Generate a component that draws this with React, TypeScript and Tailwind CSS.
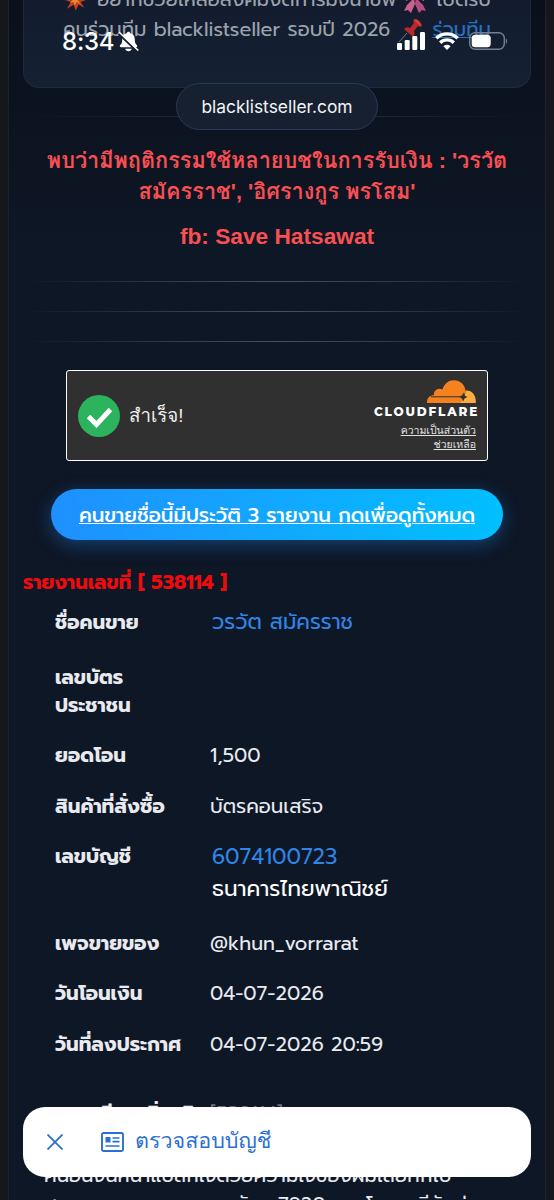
import type { ReactNode } from "react";
import { clsx } from "clsx";

const THAI = "font-['Prompt','Noto_Sans_Thai','Noto_Sans',sans-serif]";
const THAI_LOOPED = "font-['Liberation_Sans','Loma','Waree','Noto_Sans_Thai_Looped',sans-serif]";

type Row = {
  label: ReactNode;
  value?: ReactNode;
  height: string;
};

const rows: Row[] = [
  {
    label: <span>ชื่อคนขาย</span>,
    value: <span className="pl-0.5 text-[21.3px] text-[#2f86e6]">วรวัต สมัครราช</span>,
    height: "h-[54.5px]",
  },
  {
    label: (
      <span>
        เลขบัตร
        <br />
        ประชาชน
      </span>
    ),
    height: "h-[78.5px]",
  },
  { label: <span>ยอดโอน</span>, value: <span>1,500</span>, height: "h-[50.5px]" },
  { label: <span>สินค้าที่สั่งซื้อ</span>, value: <span>บัตรคอนเสริจ</span>, height: "h-[50.5px]" },
  {
    label: <span>เลขบัญชี</span>,
    value: (
      <div className="mt-px flex flex-col pl-0.5 text-[21.5px]">
        <span className="h-8 text-[#2f86e6]">6074100723</span>
        <span className="text-white">ธนาคารไทยพาณิชย์</span>
      </div>
    ),
    height: "h-[86.5px]",
  },
  { label: <span>เพจขายของ</span>, value: <span>@khun_vorrarat</span>, height: "h-[50.5px]" },
  { label: <span>วันโอนเงิน</span>, value: <span>04-07-2026</span>, height: "h-[50.5px]" },
  { label: <span>วันที่ลงประกาศ</span>, value: <span>04-07-2026 20:59</span>, height: "h-[50.5px]" },
];

function Divider({ className }: { className?: string }) {
  return (
    <div
      className={clsx(
        "h-px w-full bg-linear-to-r from-transparent via-[#485260] to-transparent",
        className
      )}
    />
  );
}

function BurstIcon() {
  return (
    <svg viewBox="0 0 22 22" className="ml-0.5 inline-block h-[22px] w-[22px]">
      <path d="M11 0l2 6 6-4-3 6 6 3-6 2 4 6-6-3-3 6-2-6-7 4 4-7-6-2 6-3-4-6 6 4z" fill="#c2401c" />
      <path d="M11 5l1 4 4-1-3 3 3 4-4-2-2 4-1-4-4 1 3-3-3-3 4 1z" fill="#e8892b" />
    </svg>
  );
}

function RibbonIcon() {
  return (
    <svg viewBox="0 0 24 24" className="inline-block h-6 w-6">
      <path d="M11 9l-7 7-3 6 4-1 3 3 4-9z" fill="#c9608f" />
      <path d="M13 9l7 7 3 6-4-1-3 3-4-9z" fill="#b64f80" />
      <path d="M12 8L3 3v9zM12 8l9-5v9z" fill="#d96c9c" />
    </svg>
  );
}

function PushpinIcon() {
  return (
    <svg viewBox="0 0 26 26" className="inline-block h-[26px] w-[26px]">
      <path d="M9 15l-8 9" stroke="#727b87" strokeWidth="1" />
      <path d="M16 1c3-1 8 4 8 7-1 1-3 1-4 0l-4 5c1 3 0 5-1 6L6 11c2-2 4-2 6-1l4-5c-1-1-1-3 0-4z" fill="#b8282b" />
      <path d="M17 2c2-1 6 4 6 6l-2-1-4-4z" fill="#da4340" />
    </svg>
  );
}

function StatusBar() {
  return (
    <div className="absolute inset-x-0 top-[27px] z-20 flex h-7 items-center pl-[62px] pr-[46px] text-white">
      <span className="mt-0.5 font-['Inter',sans-serif] text-[24px] leading-7 font-medium tracking-[-0.2px]">8:34</span>
      <svg viewBox="0 0 20 20" className="ml-1 h-[21px] w-[21px]">
        <path d="M10 .8c.9 0 1.600.6 1.700 1.400 2.700.7 4.300 2.800 4.300 5.600 0 3.200.7 4.400 1.900 5.600.8.9.4 2-.9 2H3c-1.300 0-1.700-1.100-.9-2C3.300 12.200 4 11 4 7.800c0-2.800 1.600-4.900 4.300-5.600C8.400 1.400 9.100.8 10 .8z" fill="white" />
        <path d="M6.800 16.800h6.400c-.4 1.400-1.700 2.400-3.200 2.400s-2.800-1-3.200-2.400z" fill="white" />
        <path d="M.6 2.600l17.700 16.600" stroke="#16202f" strokeWidth="2.200" />
        <path d="M1.400 1.400l17.600 16.800" stroke="white" strokeWidth="1.400" strokeLinecap="round" />
      </svg>
      <svg viewBox="0 0 28 18" className="ml-auto h-[18px] w-7" fill="white">
        <rect x="0" y="11" width="5" height="7" rx="1.300" />
        <rect x="7.700" y="8" width="5" height="10" rx="1.300" />
        <rect x="15.300" y="4" width="5" height="14" rx="1.300" />
        <rect x="23" y="0" width="5" height="18" rx="1.300" />
      </svg>
      <svg viewBox="0 0 24 18" className="ml-2.5 h-[18px] w-6" fill="none" stroke="white" strokeWidth="3.400">
        <path d="M1.300 6.300a15.200 15.200 0 0 1 21.400 0" />
        <path d="M5.200 10.700a9.700 9.700 0 0 1 13.600 0" />
        <path d="M12 18l-3.600-3.800a5.200 5.200 0 0 1 7.200 0z" fill="white" stroke="none" />
      </svg>
      <svg viewBox="0 0 39 18" className="ml-2.5 h-[18px] w-[39px]">
        <rect x=".7" y=".7" width="34.600" height="16.600" rx="5.500" fill="none" stroke="#777f8b" strokeWidth="1.400" />
        <rect x="2.700" y="2.700" width="19" height="12.600" rx="3.500" fill="white" />
        <path d="M36.800 6.200c1.600.6 1.600 5 0 5.600z" fill="#777f8b" />
      </svg>
    </div>
  );
}

function CloudflareLogo() {
  return (
    <svg viewBox="0 0 49 23" className="h-[23px] w-[49px] shrink-0">
      <path d="M0 23c-.2-4.600 2.600-7.700 7-8-.7-4.500 4.300-8 8.400-5.400C17.500 3.600 21.400.3 27 .3c6.300 0 10.800 4.400 11.500 10.400L34.500 23z" fill="#f6821f" />
      <path d="M38.500 10.600c6.300-.7 10.900 4.500 10.300 12.400H33c3.600-3 5.300-7.200 5.500-12.400z" fill="#fbad41" />
      <path d="M4 16.800h30" stroke="#303030" strokeWidth="1" />
      <path d="M36.300 12.500c.7 2.900 1.500 3.700 4.300 4.500-2.800.8-3.600 1.700-4.300 4.500-.7-2.800-1.500-3.700-4.300-4.500 2.800-.8 3.600-1.600 4.300-4.500z" fill="#303030" />
    </svg>
  );
}

function Turnstile() {
  return (
    <div className="mt-7 ml-[43px] flex h-[91px] w-[422px] shrink-0 justify-between rounded-[3px] border border-white bg-[#303030] pr-[11px] pl-[11px]">
      <div className="flex items-center gap-[9px]">
        <svg viewBox="0 0 42 42" className="h-[42px] w-[42px]">
          <circle cx="21" cy="21" r="21" fill="#2db35e" />
          <path d="M10.500 21.500l8 8 14-15" fill="none" stroke="white" strokeWidth="4.800" />
        </svg>
        <span className={clsx("mt-0.5 text-[18.7px] text-[#f0f0f0]", THAI_LOOPED)}>สำเร็จ!</span>
      </div>
      <div className="flex flex-col items-end pt-[9px] text-[10.5px] text-[#e2e2e2]">
        <CloudflareLogo />
        <span className="-mr-[3px] mt-0.5 font-['Montserrat','Prompt',sans-serif] text-[12px] leading-[14px] font-extrabold tracking-[1.800px] text-white">
          CLOUDFLARE
        </span>
        <span className={clsx("mt-1 h-[14px] leading-[14px] underline", THAI_LOOPED)}>ความเป็นส่วนตัว</span>
        <span className={clsx("h-[14px] leading-[14px] underline", THAI_LOOPED)}>ช่วยเหลือ</span>
      </div>
    </div>
  );
}

export default function App() {
  return (
    <div className={clsx("relative h-[1200px] w-[554px] overflow-hidden bg-[#15171c] px-2 text-[#e8eaf0]", THAI)}>
      <StatusBar />

      <main className="flex h-full flex-col border-x border-[#1c232d] bg-linear-to-b from-[#0a0f1b] to-[#0e1726] to-[20%] px-3.5">
        {/* Announcement card */}
        <section className="h-[88px] shrink-0 overflow-hidden rounded-b-2xl border border-t-0 border-[#1e293a] bg-linear-to-b from-[#121c2e] to-[#152033] px-[39px] text-[19.7px] whitespace-nowrap text-[#9da3ad]">
          <p className="-mt-[15px] flex h-[30px] items-center">
            <BurstIcon />
            <span className="ml-[11px]">อยากช่วยเหลือสังคมงดการมิจฉาชีพ</span>
            <span className="ml-[7px]"><RibbonIcon /></span>
            <span className="ml-[9px]">เปิดรับ</span>
          </p>
          <p className="flex h-[30px] items-center">
            <span>คนร่วมทีม blacklistseller รอบปี 2026</span>
            <span className="ml-2"><PushpinIcon /></span>
            <span className="ml-2 text-[#2a70bd] underline">ร่วมทีม</span>
          </p>
        </section>

        <Divider className="mt-7 shrink-0 opacity-50" />
        <div className="absolute top-[83px] left-[176px] flex h-[47px] w-[202px] items-center justify-center rounded-full border border-[#293a55] bg-[#162030] pt-px font-['Inter',sans-serif] text-[17.400px] text-[#f3f4f6]">
          blacklistseller.com
        </div>

        {/* Warning */}
        <section className={clsx("mt-7 text-center text-[21.7px] leading-[31px] font-bold whitespace-nowrap text-[#f94f52]", THAI_LOOPED)}>
          <p>พบว่ามีพฤติกรรมใช้หลายบชในการรับเงิน : 'วรวัต</p>
          <p>สมัครราช', 'อิศรางกูร พรโสม'</p>
          <p className="mt-[14px] text-[22.700px]">fb: Save Hatsawat</p>
        </section>

        <div className="mt-[29px] flex shrink-0 flex-col gap-[29px]">
          <Divider />
          <Divider />
          <Divider />
        </div>

        <Turnstile />

        <a className="mx-auto mt-7 flex h-[51px] w-[452px] shrink-0 items-center justify-center rounded-full bg-linear-to-r from-[#1e90ff] to-[#00bfff] pt-0.5 text-[19.750px] font-medium whitespace-nowrap text-white underline shadow-[0_5px_18px_rgba(30,144,255,0.35)]">
          คนขายชื่อนี้มีประวัติ 3 รายงาน กดเพื่อดูทั้งหมด
        </a>

        {/* Report details */}
        <h2 className="mt-7 h-[29px] shrink-0 text-[19.700px] leading-[29px] font-bold text-[#ee0b0e]">
          รายงานเลขที่ [ 538114 ]
        </h2>
        <dl className="shrink-0 text-[19.800px] leading-7 whitespace-nowrap">
          {rows.map((row, i) => (
            <div key={i} className={clsx("flex pt-[11px] pl-8", row.height)}>
              <dt className="w-[155px] font-bold">{row.label}</dt>
              <dd>{row.value}</dd>
            </div>
          ))}
          <div className="flex h-[92px] pt-[30px] pl-5">
            <dt className="w-[167px] font-bold">รายละเอียดเพิ่มเติม</dt>
            <dd className="text-[#6b727b]">[538114]</dd>
          </div>
        </dl>
        <div className="pl-[21px] text-[19.800px] leading-[29px] whitespace-nowrap">
          <p>คนอื่นจนหน้าแปลกใจด้วยความใจของผมเลยทักไป</p>
          <p>สอบถาม พบยอด ราคาบัตร 7920บาท โดยจะมีหักค่า</p>
        </div>
      </main>

      {/* Bottom sheet */}
      <div className="absolute inset-x-[23px] top-[1107px] flex h-[70px] items-center rounded-[22px] bg-white pl-6 text-[#2a70d2]">
        <svg viewBox="0 0 16 16" className="h-4 w-4" stroke="currentColor" strokeWidth="1.800">
          <path d="M.5.5l15 15M15.500.5l-15 15" />
        </svg>
        <svg viewBox="0 0 23 20" className="ml-[38px] h-5 w-[23px]" fill="none" stroke="currentColor" strokeWidth="1.900">
          <rect x="1" y="1" width="21" height="18" rx="1.500" />
          <path d="M11.500 6h7M11.500 9.700h7M4.500 14h14" strokeWidth="1.700" />
          <rect x="4.500" y="5" width="5" height="5.500" fill="currentColor" stroke="none" />
        </svg>
        <span className={clsx("-mt-0.5 ml-[11px] text-[21.5px]", THAI_LOOPED)}>ตรวจสอบบัญชี</span>
      </div>
    </div>
  );
}
